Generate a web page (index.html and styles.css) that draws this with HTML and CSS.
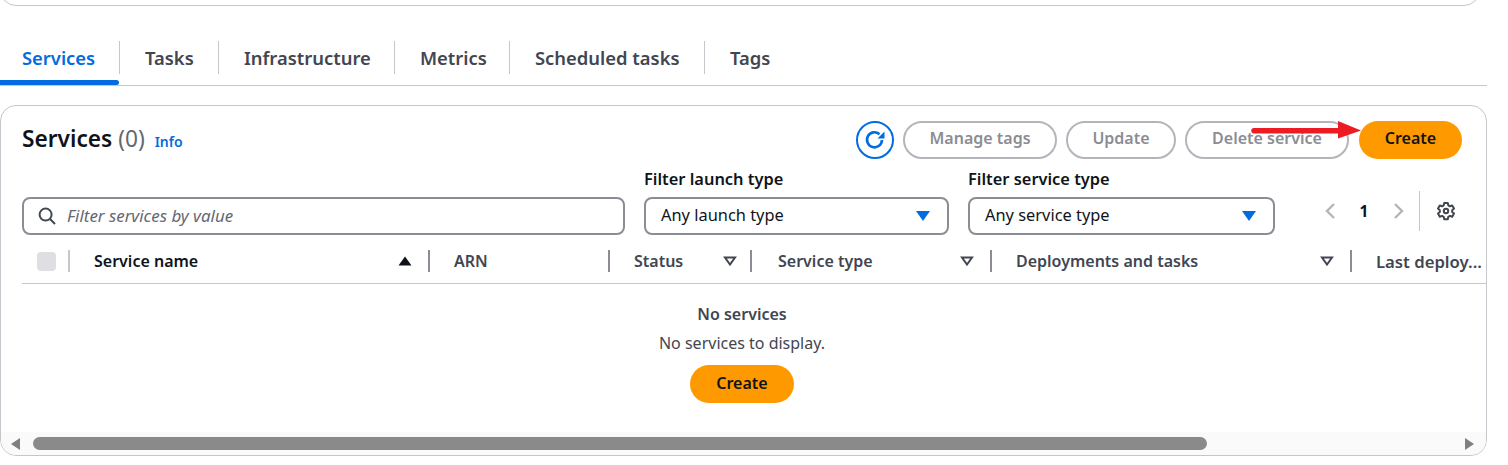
FILE: index.html
```html
<!DOCTYPE html>
<html lang="en">
<head>
<meta charset="utf-8">
<title>Services</title>
<link rel="stylesheet" href="styles.css">
</head>
<body>
<div class="page">
  <div class="top-clip"><div class="top-card"></div></div>
  <nav class="tabs">
    <a class="tab active">Services</a>
    <a class="tab">Tasks</a>
    <a class="tab">Infrastructure</a>
    <a class="tab">Metrics</a>
    <a class="tab">Scheduled tasks</a>
    <a class="tab last">Tags</a>
  </nav>
  <section class="card">
    <header class="head">
      <h2 class="title">Services <span class="count">(0)</span> <a class="info">Info</a></h2>
      <div class="actions">
        <button class="refresh" aria-label="Refresh">
          <svg width="22" height="22" viewBox="0 0 22 22" fill="none" stroke="#006ce0" stroke-width="2.6"><path d="M15.5 5.2A7.5 7.5 0 1 0 18 11"/><path d="M20.500 2.500v7h-7z" fill="#006ce0" stroke="none"/></svg>
        </button>
        <button class="btn off w-tags">Manage tags</button>
        <button class="btn off w-update">Update</button>
        <button class="btn off w-delete">Delete service</button>
        <button class="btn primary w-create">Create</button>
      </div>
    </header>
    <div class="filters">
      <label class="search">
        <svg width="18" height="18" viewBox="0 0 18 18" fill="none" stroke="#424650" stroke-width="2"><circle cx="7.6" cy="7.6" r="6"/><path d="M12 12l5 5"/></svg>
        <span class="placeholder">Filter services by value</span>
      </label>
      <div class="field f-launch">
        <div class="flabel">Filter launch type</div>
        <div class="select"><span>Any launch type</span><i class="caret"></i></div>
      </div>
      <div class="field f-type">
        <div class="flabel">Filter service type</div>
        <div class="select"><span>Any service type</span><i class="caret"></i></div>
      </div>
      <div class="pager">
        <svg width="14" height="18" viewBox="0 0 14 18" fill="none" stroke="#b4b4bb" stroke-width="2.4"><path d="M11 2L4 9l7 7"/></svg>
        <span class="page-num">1</span>
        <svg width="14" height="18" viewBox="0 0 14 18" fill="none" stroke="#b4b4bb" stroke-width="2.4"><path d="M3 2l7 7-7 7"/></svg>
        <span class="pager-sep"></span>
        <svg class="gear" width="20" height="20" viewBox="0 0 20 20" fill="none" stroke="#424650" stroke-width="2" stroke-linejoin="round"><path d="M8.2 2h3.6l.5 2.4 1.6.9 2.3-.8 1.800 3.100-1.800 1.600v1.800l1.800 1.600-1.800 3.100-2.300-.8-1.600.9-.5 2.400H8.200l-.5-2.400-1.600-.9-2.300.8-1.800-3.100 1.800-1.600V9.200L2 7.600l1.800-3.100 2.300.8 1.600-.9z"/><circle cx="10" cy="10" r="2.2"/></svg>
      </div>
    </div>
    <div class="thead">
      <div class="th c-check"><span class="checkbox"></span></div>
      <div class="th c-name first-col">Service name<svg class="sort" width="14" height="10" viewBox="0 0 14 10"><path d="M7 0.5L13.5 9.5H0.5z" fill="#0f141a"/></svg></div>
      <div class="th c-arn">ARN</div>
      <div class="th c-status">Status<svg class="sort" width="14" height="10" viewBox="0 0 14 10" fill="none" stroke="#424650" stroke-width="2"><path d="M2 1.5h10L7 8.5z"/></svg></div>
      <div class="th c-type">Service type<svg class="sort" width="14" height="10" viewBox="0 0 14 10" fill="none" stroke="#424650" stroke-width="2"><path d="M2 1.5h10L7 8.5z"/></svg></div>
      <div class="th c-dep">Deployments and tasks<svg class="sort" width="14" height="10" viewBox="0 0 14 10" fill="none" stroke="#424650" stroke-width="2"><path d="M2 1.5h10L7 8.5z"/></svg></div>
      <div class="th c-last">Last deploy...</div>
    </div>
    <div class="empty">
      <div class="empty-title">No services</div>
      <div class="empty-text">No services to display.</div>
      <button class="btn primary w-create2">Create</button>
    </div>
    <div class="scrollbar">
      <i class="arrow-left"></i>
      <div class="track"><div class="thumb"></div></div>
      <i class="arrow-right"></i>
    </div>
  </section>
  <svg class="annot" width="112" height="22" viewBox="0 0 112 22"><path d="M4 8h84V1l23 9.500-23 8V13.500H4a2.750 2.750 0 0 1 0-5.500z" fill="#ed1c24"/></svg>
</div>
</body>
</html>
```
FILE: styles.css
```css
* { box-sizing: border-box; }
html, body { margin: 0; padding: 0; background: #fff; }
body { font-family: "Noto Sans", "Open Sans", sans-serif; color: #0f141a; height: 465px; overflow: hidden; }
.page { position: relative; width: 1487px; }

.top-clip { height: 6px; overflow: hidden; padding-right: 7px; }
.top-card { height: 40px; margin-top: -34px; border: 1px solid #c6c6cd; border-radius: 16px; }

.tabs { display: grid; grid-template-columns: 120px 99px 176px 115px 195px 1fr; margin-top: 35px; height: 45px; border-bottom: 1px solid #c6c6cd; }
.tab { position: relative; display: block; height: 33px; line-height: 34px; padding: 0 0 0 25px; font-size: 18.400px; font-weight: 600; color: #424650; border-right: 1px solid #c6c6cd; white-space: nowrap; }
.tab.active { color: #006ce0; padding-left: 22px; }
.tab.active::after { content: ""; position: absolute; left: 0; right: 0; top: 39px; height: 5px; background: #006ce0; border-radius: 0 3px 3px 0; }
.tab.last { border-right: 0; }

.card { position: relative; margin-top: 19px; height: 351px; border: 1px solid #c6c6cd; border-radius: 16px; padding: 15px 0 0 21px; overflow: hidden; }
.head { display: flex; justify-content: space-between; align-items: center; height: 38px; padding-right: 24px; }
.title { margin: 0; font-size: 22.700px; font-weight: 600; line-height: 36px; color: #0f141a; }
.count { font-weight: 400; color: #656871; }
.info { font-size: 14px; font-weight: 600; color: #006ce0; margin-left: 4px; }
.actions { display: flex; align-items: center; }
.refresh { width: 38px; height: 38px; border: 2px solid #006ce0; border-radius: 50%; background: #fff; padding: 0; display: flex; align-items: center; justify-content: center; margin-right: 9px; }
.btn { height: 38px; border-radius: 19px; font: 600 16px "Noto Sans", sans-serif; padding: 0 0 3px; }
.actions .btn { padding-bottom: 5px; }
.btn.off { background: #fff; border: 2px solid #b4b4bb; color: #8c8c94; margin-right: 9px; }
.btn.primary { background: #ff9900; border: 0; color: #0f141a; }
.w-tags { width: 154px; }
.w-update { width: 110px; }
.w-delete { width: 164px; margin-right: 10px !important; }
.w-create { width: 103px; }
.w-create2 { width: 104px; }

.filters { display: flex; align-items: flex-end; height: 76px; padding-right: 10px; margin-top: 0; }
.search { display: flex; align-items: center; gap: 11px; width: 603px; height: 38px; padding-left: 14px; border: 2px solid #8c8c94; border-radius: 8px; margin-right: 19px; }
.placeholder { font-size: 16.900px; font-style: italic; color: #656871; margin-bottom: 2px; }
.field { display: flex; flex-direction: column; }
.f-launch { width: 305px; margin-right: 19px; }
.f-type { width: 307px; margin-right: 48px; }
.flabel { font-size: 16.400px; font-weight: 600; line-height: 20px; margin-bottom: 8px; }
.select { display: flex; align-items: center; justify-content: space-between; height: 38px; padding: 0 17px 4px 15px; border: 2px solid #8c8c94; border-radius: 8px; font-size: 16.400px; }
.caret { width: 0; height: 0; border-left: 7px solid transparent; border-right: 7px solid transparent; border-top: 10px solid #006ce0; margin-top: 4px; }
.pager { display: flex; align-items: center; height: 40px; margin-bottom: 4px; }
.page-num { width: 50px; text-align: center; font-size: 15.500px; font-weight: 700; margin: 0 3px 0 2px; }
.pager-sep { width: 1px; height: 40px; background: #c6c6cd; margin: 0 16px 0 13px; }

.thead { display: grid; grid-template-columns: 46px 360px 180px 142px 240px 360px 1fr; height: 49px; padding-top: 15px; border-bottom: 1px solid #c6c6cd; margin-top: 0; }
.th { position: relative; display: flex; align-items: center; justify-content: space-between; height: 22px; padding: 0 16px 0 24px; border-left: 2px solid #8c8c94; font-size: 16px; font-weight: 600; color: #424650; white-space: nowrap; }
.c-check { border-left: 0; padding: 0 0 0 15px; }
.checkbox { width: 19px; height: 19px; background: #dedee3; border-radius: 4px; }
.first-col { border-left-color: #c6c6cd; color: #0f141a; }
.c-status { padding-right: 13px; }
.c-type { padding-left: 26px; }
.c-last { padding-right: 0; font-size: 16.700px; }

.empty { display: flex; flex-direction: column; align-items: center; padding-right: 24px; font-size: 16px; color: #424650; }
.empty-title { font-weight: 600; margin-top: 19px; line-height: 22px; }
.empty-text { margin-top: 7px; line-height: 22px; }
.empty .btn { margin-top: 11px; }

.scrollbar { position: absolute; left: 0; right: 0; bottom: 0; height: 23px; background: #fafafa; display: flex; align-items: center; }
.track { flex: 1; margin: 0 20px 0 13px; }
.thumb { width: 1174px; height: 13px; background: #8a8a8a; border-radius: 7px; }
.arrow-left { margin-left: 10px; border-top: 6px solid transparent; border-bottom: 6px solid transparent; border-right: 9px solid #7f7f7f; }
.arrow-right { margin-right: 12px; border-top: 6px solid transparent; border-bottom: 6px solid transparent; border-left: 9px solid #7f7f7f; }

.annot { position: absolute; left: 1250px; top: 120px; }
```
